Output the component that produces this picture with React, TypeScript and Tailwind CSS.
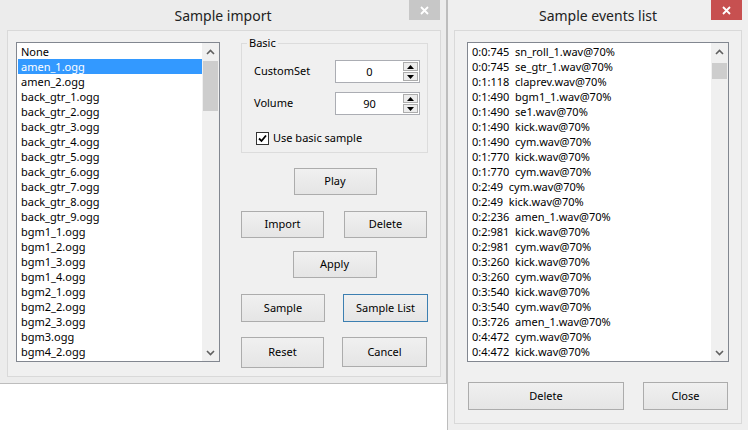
import React from "react";

const sampleFiles = [
  "None",
  "amen_1.ogg",
  "amen_2.ogg",
  "back_gtr_1.ogg",
  "back_gtr_2.ogg",
  "back_gtr_3.ogg",
  "back_gtr_4.ogg",
  "back_gtr_5.ogg",
  "back_gtr_6.ogg",
  "back_gtr_7.ogg",
  "back_gtr_8.ogg",
  "back_gtr_9.ogg",
  "bgm1_1.ogg",
  "bgm1_2.ogg",
  "bgm1_3.ogg",
  "bgm1_4.ogg",
  "bgm2_1.ogg",
  "bgm2_2.ogg",
  "bgm2_3.ogg",
  "bgm3.ogg",
  "bgm4_2.ogg",
];

const events = [
  ["0:0:745", "sn_roll_1.wav@70%"],
  ["0:0:745", "se_gtr_1.wav@70%"],
  ["0:1:118", "claprev.wav@70%"],
  ["0:1:490", "bgm1_1.wav@70%"],
  ["0:1:490", "se1.wav@70%"],
  ["0:1:490", "kick.wav@70%"],
  ["0:1:490", "cym.wav@70%"],
  ["0:1:770", "kick.wav@70%"],
  ["0:1:770", "cym.wav@70%"],
  ["0:2:49", "cym.wav@70%"],
  ["0:2:49", "kick.wav@70%"],
  ["0:2:236", "amen_1.wav@70%"],
  ["0:2:981", "kick.wav@70%"],
  ["0:2:981", "cym.wav@70%"],
  ["0:3:260", "kick.wav@70%"],
  ["0:3:260", "cym.wav@70%"],
  ["0:3:540", "kick.wav@70%"],
  ["0:3:540", "cym.wav@70%"],
  ["0:3:726", "amen_1.wav@70%"],
  ["0:4:472", "cym.wav@70%"],
  ["0:4:472", "kick.wav@70%"],
];

function Chevron({ down }: { down?: boolean }) {
  return (
    <svg width="9" height="6" viewBox="0 0 9 6">
      <polyline
        points={down ? "1,1 4.5,4.5 8,1" : "1,5 4.5,1.5 8,5"}
        fill="none"
        stroke="#606060"
        strokeWidth="1.6"
      />
    </svg>
  );
}

function Scrollbar({ thumbTop, thumbHeight }: { thumbTop: number; thumbHeight: number }) {
  return (
    <div className="flex w-[17px] flex-col bg-[#f0f0f0]">
      <div className="flex h-[17px] items-center justify-center">
        <Chevron />
      </div>
      <div className="flex-1 px-[1px]">
        <div className="bg-[#cdcdcd]" style={{ marginTop: thumbTop, height: thumbHeight }} />
      </div>
      <div className="flex h-[17px] items-center justify-center">
        <Chevron down />
      </div>
    </div>
  );
}

function Button({ label, className, focused }: { label: string; className: string; focused?: boolean }) {
  return (
    <div
      className={
        "flex items-center justify-center border bg-linear-to-b from-[#f0f0f0] to-[#e5e5e5] text-[11px] text-black " +
        (focused ? "border-[#3c7fb1] " : "border-[#acacac] ") +
        className
      }
    >
      {label}
    </div>
  );
}

function Spin({ value }: { value: string }) {
  return (
    <div className="flex h-[23px] w-[85px] border border-[#abadb3] bg-white">
      <div className="flex-1 text-center text-[11px] leading-[21px]">{value}</div>
      <div className="flex w-[16px] flex-col gap-[1px] py-[1px] pr-[1px]">
        <div className="flex flex-1 items-center justify-center border border-[#acacac] bg-[#ececec]">
          <svg width="7" height="4" viewBox="0 0 7 4">
            <polygon points="0,4 3.5,0 7,4" fill="#000" />
          </svg>
        </div>
        <div className="flex flex-1 items-center justify-center border border-[#acacac] bg-[#ececec]">
          <svg width="7" height="4" viewBox="0 0 7 4">
            <polygon points="0,0 3.5,4 7,0" fill="#000" />
          </svg>
        </div>
      </div>
    </div>
  );
}

function TitleBar({ title, active }: { title: string; active?: boolean }) {
  return (
    <div className="relative flex h-[30px] items-center justify-center text-[14px] text-[#222]">
      {title}
      <div
        className={
          "absolute top-0 right-[6px] flex h-[20px] w-[31px] items-center justify-center " +
          (active ? "bg-[#c75050]" : "bg-[#c7c7c7]")
        }
      >
        <svg width="9" height="9" viewBox="0 0 9 9">
          <path d="M1 1 L8 8 M8 1 L1 8" stroke="#fff" strokeWidth="1.8" />
        </svg>
      </div>
    </div>
  );
}

export default function App() {
  return (
    <div className="relative h-[430px] w-[748px] overflow-hidden bg-white font-['Noto_Sans',sans-serif] text-black">
      {/* Sample import window */}
      <div className="absolute top-0 left-0 flex h-[384px] w-[447px] flex-col border-r border-b border-[#bdbdbd] bg-[#ececec]">
        <TitleBar title="Sample import" />
        <div className="mr-[5px] mb-[6px] ml-[7px] flex flex-1 border border-[#d9d9d9] bg-[#f0f0f0] pt-[11px] pl-[8px]">
          <div className="flex h-[320px] w-[204px] border border-[#828790] bg-white">
            <div className="flex-1 pt-[1px] pl-[1px] text-[11px]">
              {sampleFiles.map((f, i) => (
                <div
                  key={f}
                  className={
                    "h-[15px] pl-[3px] leading-[15px] " + (i === 1 ? "bg-[#3399ff] text-white" : "")
                  }
                >
                  {f}
                </div>
              ))}
            </div>
            <Scrollbar thumbTop={1} thumbHeight={50} />
          </div>

          <div className="ml-[21px] flex w-[187px] flex-col pt-[1px] text-[11px]">
            <div className="relative h-[110px] border border-[#dcdcdc] pt-[16px] pl-[12px]">
              <span className="absolute top-[-9px] left-[5px] bg-[#f0f0f0] px-[2px] leading-[16px]">Basic</span>
              <div className="flex items-center">
                <span className="w-[81px]">CustomSet</span>
                <Spin value="0" />
              </div>
              <div className="mt-[9px] flex items-center">
                <span className="w-[81px]">Volume</span>
                <Spin value="90" />
              </div>
              <div className="mt-[15px] flex items-center gap-[4px] pl-[2px]">
                <div className="flex h-[13px] w-[13px] items-center justify-center border border-[#333] bg-white">
                  <svg width="9" height="9" viewBox="0 0 9 9">
                    <path d="M1 4.5 L3.5 7 L8 1.5" fill="none" stroke="#000" strokeWidth="1.8" />
                  </svg>
                </div>
                <span>Use basic sample</span>
              </div>
            </div>

            <div className="mt-[15px] flex justify-center">
              <Button label="Play" className="ml-[1px] h-[27px] w-[83px]" />
            </div>
            <div className="mt-[16px] flex justify-between">
              <Button label="Import" className="h-[27px] w-[83px]" />
              <Button label="Delete" className="mr-[1px] h-[27px] w-[83px]" />
            </div>
            <div className="mt-[13px] flex justify-center">
              <Button label="Apply" className="h-[27px] w-[84px]" />
            </div>
            <div className="mt-[16px] flex justify-between">
              <Button label="Sample" className="h-[28px] w-[84px]" />
              <Button label="Sample List" focused className="h-[28px] w-[85px]" />
            </div>
            <div className="mt-[15px] flex justify-between">
              <Button label="Reset" className="h-[31px] w-[83px]" />
              <Button label="Cancel" className="mr-[1px] h-[30px] w-[85px]" />
            </div>
          </div>
        </div>
      </div>

      {/* Sample events list window */}
      <div className="absolute top-0 left-[447px] flex h-[430px] w-[301px] flex-col border-l border-[#bdbdbd] bg-[#efefef]">
        <TitleBar title="Sample events list" active />
        <div className="mr-[6px] mb-[6px] ml-[6px] flex flex-1 flex-col border border-[#d9d9d9] bg-[#f0f0f0] pt-[11px] pl-[12px]">
          <div className="flex h-[320px] w-[262px] border border-[#828790] bg-white">
            <div className="flex-1 pt-[1px] pl-[4px] text-[11px]">
              {events.map(([t, name], i) => (
                <div key={i} className="h-[15px] leading-[15px] whitespace-pre">
                  {t + "  " + name}
                </div>
              ))}
            </div>
            <Scrollbar thumbTop={3} thumbHeight={16} />
          </div>
          <div className="mt-[20px] flex gap-[19px] pl-[1px]">
            <Button label="Delete" className="h-[28px] w-[156px]" />
            <Button label="Close" className="h-[28px] w-[85px]" />
          </div>
        </div>
      </div>
    </div>
  );
}
